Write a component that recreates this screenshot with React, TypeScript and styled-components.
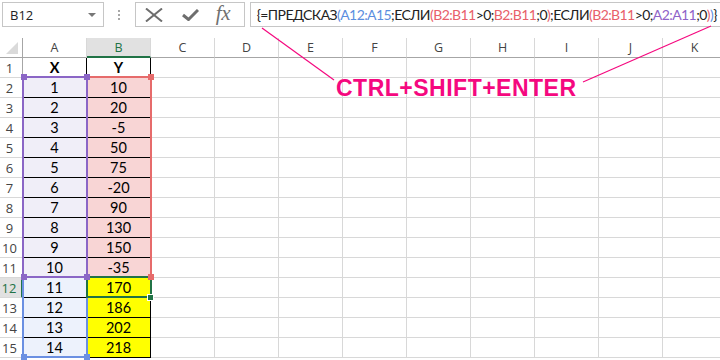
import React from "react";
import styled, { createGlobalStyle, css } from "styled-components";

const GlobalStyle = createGlobalStyle`
  html, body { margin: 0; padding: 0; background: #fff; }
  body { font-family: "Open Sans", "Liberation Sans", sans-serif; }
  * { box-sizing: border-box; }
`;

const GREEN = "#217346";
const PINK = "#f5087f";
const C_BLUE = "#5b8ee0";
const C_RED = "#e8606a";
const C_PURPLE = "#8e62c8";
const C_BLACK = "#222";

const Screen = styled.div`
  position: relative;
  width: 720px;
  height: 360px;
  overflow: hidden;
  background: #fff;
`;

const FormulaBar = styled.div`
  display: flex;
  align-items: stretch;
  height: 27px;
  padding: 2px 0 0 2px;
`;

const NameBox = styled.div`
  width: 102px;
  height: 25px;
  border: 1px solid #c6c6c6;
  display: flex;
  align-items: center;
  justify-content: space-between;
  padding: 0 7px 0 7px;
  font-family: "Open Sans", sans-serif;
  font-size: 13px;
  color: #222;
`;

const DropArrow = styled.span`
  width: 0;
  height: 0;
  border-left: 4px solid transparent;
  border-right: 4px solid transparent;
  border-top: 4px solid #777;
`;

const Grip = styled.div`
  width: 31px;
  display: flex;
  flex-direction: column;
  align-items: center;
  justify-content: center;
  gap: 2px;
`;

const GripDot = styled.span`
  width: 2px;
  height: 2px;
  background: #a8a8a8;
`;

const ButtonsBox = styled.div`
  width: 110px;
  height: 25px;
  border: 1px solid #c6c6c6;
  display: flex;
  align-items: center;
  padding-left: 9px;
`;

const IconSlot = styled.span<{ $w: number }>`
  width: ${(p) => p.$w}px;
  display: flex;
  align-items: center;
  justify-content: flex-start;
`;

const Fx = styled.span`
  font-family: "Liberation Serif", "DejaVu Serif", serif;
  font-style: italic;
  font-size: 21px;
  color: #707070;
  line-height: 1;
  margin-top: -2px;
  letter-spacing: -0.5px;
`;

const FormulaBox = styled.div`
  margin-left: 5px;
  width: 471px;
  height: 25px;
  border: 1px solid #c6c6c6;
  border-right: none;
  display: flex;
  align-items: center;
  padding-left: 6px;
  font-family: Lato, "Liberation Sans", sans-serif;
  font-size: 14px;
  letter-spacing: -0.58px;
  white-space: nowrap;
  overflow: hidden;
`;

const Tok = styled.span<{ $c: string }>`
  color: ${(p) => p.$c};
`;

const Sheet = styled.div`
  position: relative;
  margin-top: 11px;
  display: grid;
  grid-template-columns: 23px repeat(11, 64px);
  grid-auto-rows: 20px;
`;

const ColHead = styled.div<{ $sel?: boolean }>`
  border-right: 1px solid #d8d8d8;
  border-bottom: 1px solid #a6a6a6;
  display: flex;
  align-items: center;
  justify-content: center;
  font-family: "Open Sans", sans-serif;
  font-size: 12.5px;
  color: #444;
  background: #fff;
  ${(p) =>
    p.$sel &&
    css`
      background: #e1e1e1;
      color: ${GREEN};
      border-bottom: 2px solid ${GREEN};
    `}
`;

const Corner = styled.div`
  position: relative;
  border-right: 1px solid #a6a6a6;
  border-bottom: 1px solid #a6a6a6;
  &::after {
    content: "";
    position: absolute;
    right: 4px;
    bottom: 3px;
    width: 0;
    height: 0;
    border-left: 12px solid transparent;
    border-bottom: 12px solid #dadada;
  }
`;

const RowHead = styled.div<{ $sel?: boolean }>`
  border-right: 1px solid #a6a6a6;
  border-bottom: 1px solid #d8d8d8;
  display: flex;
  align-items: center;
  justify-content: center;
  padding-right: 3px;
  font-family: "Open Sans", sans-serif;
  font-size: 13px;
  color: #444;
  ${(p) =>
    p.$sel &&
    css`
      background: #e1e1e1;
      color: ${GREEN};
      border-right: 2px solid ${GREEN};
    `}
`;

const Cell = styled.div<{ $bg?: string; $bold?: boolean; $table?: boolean }>`
  border-right: 1px solid ${(p) => (p.$table ? "#000" : "#d8d8d8")};
  border-bottom: 1px solid ${(p) => (p.$table ? "#000" : "#d8d8d8")};
  background: ${(p) => p.$bg || "#fff"};
  display: flex;
  align-items: center;
  justify-content: center;
  font-family: Lato, "Liberation Sans", sans-serif;
  font-size: 14.5px;
  font-weight: ${(p) => (p.$bold ? 700 : 400)};
  color: #000;
`;

const RangeBox = styled.div<{ $color: string }>`
  position: absolute;
  border: 2px solid ${(p) => p.$color};
  pointer-events: none;
`;

const Handle = styled.div<{ $color: string }>`
  position: absolute;
  width: 6px;
  height: 6px;
  background: ${(p) => p.$color};
  pointer-events: none;
`;

const FillHandle = styled(Handle)`
  border: 1px solid #fff;
  width: 7px;
  height: 7px;
`;

const Annotation = styled.svg`
  position: absolute;
  left: 0;
  top: 0;
  pointer-events: none;
`;

const Callout = styled.div`
  position: absolute;
  left: 336px;
  top: 77px;
  font-family: "Liberation Sans", Arial, sans-serif;
  font-weight: 700;
  font-size: 23px;
  line-height: 1;
  letter-spacing: 0.5px;
  color: ${PINK};
  white-space: nowrap;
`;

const tokens: [string, string][] = [
  ["{", C_BLACK],
  ["=ПРЕДСКАЗ", C_BLACK],
  ["(", C_BLUE],
  ["A12:A15", C_BLUE],
  [";ЕСЛИ", C_BLACK],
  ["(", C_RED],
  ["B2:B11", C_RED],
  [">0;", C_BLACK],
  ["B2:B11", C_RED],
  [";0", C_BLACK],
  [")", C_RED],
  [";ЕСЛИ", C_BLACK],
  ["(", C_RED],
  ["B2:B11", C_RED],
  [">0;", C_BLACK],
  ["A2:A11", C_PURPLE],
  [";0", C_BLACK],
  [")", C_RED],
  [")", C_BLUE],
  ["}", C_BLACK],
];

const COLS = ["A", "B", "C", "D", "E", "F", "G", "H", "I", "J", "K"];
const YS = [10, 20, -5, 50, 75, -20, 90, 130, 150, -35, 170, 186, 202, 218];

// geometry helpers (relative to Sheet)
const colLine = (c: number) => 22 + 64 * c; // left line of column c (0=A)
const rowLine = (r: number) => 19 + 20 * (r - 1); // top line of row r (1-based)

type Box = { c1: number; c2: number; r1: number; r2: number; color: string };

const boxStyle = (b: Box) => {
  const x1 = colLine(b.c1);
  const x2 = colLine(b.c2 + 1);
  const y1 = rowLine(b.r1);
  const y2 = rowLine(b.r2 + 1);
  return { left: x1, top: y1 - 1, width: x2 - x1 + 2, height: y2 - y1 + 2 };
};

const handleStyle = (x: number, y: number) => ({ left: x - 2, top: y - 3 });

const PURPLE = "#8b66c6";
const RED = "#e66b6b";
const BLUE = "#6b90e2";

const boxes: Box[] = [
  { c1: 1, c2: 1, r1: 2, r2: 11, color: RED },
  { c1: 0, c2: 0, r1: 12, r2: 15, color: BLUE },
  { c1: 0, c2: 0, r1: 2, r2: 11, color: PURPLE },
];

const handles: [number, number, string][] = [
  [colLine(1), rowLine(16), BLUE],
  [colLine(0) + 1, rowLine(16), BLUE],
  [colLine(2), rowLine(2), RED],
  [colLine(2), rowLine(12), RED],
  [colLine(0) + 1, rowLine(2), PURPLE],
  [colLine(1), rowLine(2), PURPLE],
  [colLine(0) + 1, rowLine(12), PURPLE],
  [colLine(1), rowLine(12), PURPLE],
];

function cellProps(row: number, col: number): { text: string; bg?: string; bold?: boolean; table: boolean } {
  if (col > 1) return { text: "", table: false };
  if (row === 1) return { text: col === 0 ? "X" : "Y", bold: true, table: true };
  const i = row - 2;
  const text = col === 0 ? String(row - 1) : String(YS[i]);
  let bg: string;
  if (row <= 11) bg = col === 0 ? "#f0eef8" : "#f8d5d5";
  else bg = col === 0 ? "#edf2fc" : "#ffff00";
  return { text, bg, table: true };
}

export default function App() {
  const rows = Array.from({ length: 15 }, (_, i) => i + 1);
  return (
    <Screen>
      <GlobalStyle />
      <FormulaBar>
        <NameBox>
          <span>B12</span>
          <DropArrow />
        </NameBox>
        <Grip>
          <GripDot />
          <GripDot />
          <GripDot />
        </Grip>
        <ButtonsBox>
          <IconSlot $w={37}>
            <svg width="18" height="14" viewBox="0 0 18 14">
              <path d="M1 0.5 L17 13.5 M17 0.5 L1 13.5" stroke="#6e6e6e" strokeWidth="2" fill="none" />
            </svg>
          </IconSlot>
          <IconSlot $w={34}>
            <svg width="17" height="12" viewBox="0 0 17 12">
              <path d="M1 6 L6.5 10.5 L16 1" stroke="#6e6e6e" strokeWidth="3" fill="none" />
            </svg>
          </IconSlot>
          <IconSlot $w={26}>
            <Fx>fx</Fx>
          </IconSlot>
        </ButtonsBox>
        <FormulaBox>
          {tokens.map(([t, c], i) => (
            <Tok key={i} $c={c}>
              {t}
            </Tok>
          ))}
        </FormulaBox>
      </FormulaBar>

      <Sheet>
        <Corner />
        {COLS.map((c, i) => (
          <ColHead key={c} $sel={i === 1}>
            {c}
          </ColHead>
        ))}
        {rows.map((r) => (
          <React.Fragment key={r}>
            <RowHead $sel={r === 12}>{r}</RowHead>
            {COLS.map((c, ci) => {
              const p = cellProps(r, ci);
              return (
                <Cell key={c} $bg={p.bg} $bold={p.bold} $table={p.table}>
                  {p.text}
                </Cell>
              );
            })}
          </React.Fragment>
        ))}

        {boxes.map((b, i) => (
          <RangeBox key={i} $color={b.color} style={boxStyle(b)} />
        ))}
        <RangeBox $color={GREEN} style={boxStyle({ c1: 1, c2: 1, r1: 12, r2: 12, color: GREEN })} />
        {handles.map(([x, y, col], i) => (
          <Handle key={i} $color={col} style={handleStyle(x, y)} />
        ))}
        <FillHandle $color={GREEN} style={{ left: colLine(2) - 3, top: rowLine(13) - 3 }} />
      </Sheet>

      <Annotation width="720" height="360" viewBox="0 0 720 360">
        <line x1="262" y1="28" x2="334" y2="80" stroke={PINK} strokeWidth="1.2" />
        <line x1="711" y1="26" x2="583" y2="82" stroke={PINK} strokeWidth="1.2" />
      </Annotation>
      <Callout>CTRL+SHIFT+ENTER</Callout>
    </Screen>
  );
}
